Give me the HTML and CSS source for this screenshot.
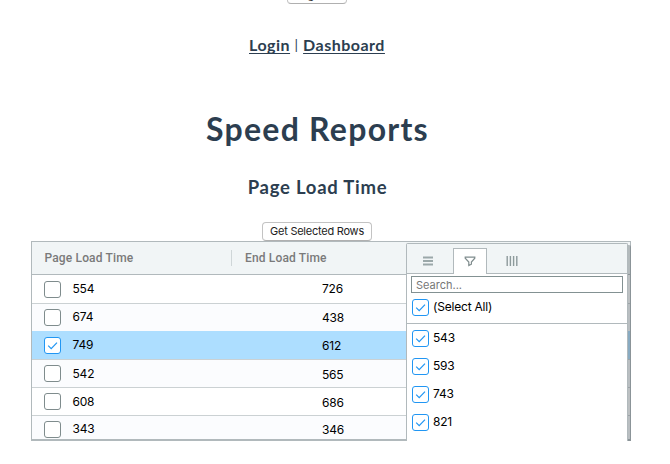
FILE: index.html
```html
<!DOCTYPE html>
<html lang="en">
<head>
<meta charset="utf-8">
<title>Speed Reports</title>
<link rel="stylesheet" href="styles.css">
</head>
<body>
<svg class="defs" width="0" height="0"><defs>
<symbol id="check" viewBox="0 0 17 17"><path d="M4.2 8.6 7.2 11.6 13 5.6" fill="none" stroke="#2196f3" stroke-width="1.2"/></symbol>
</defs></svg>
<div class="top"><button class="btn logout">Log Out</button></div>
<nav class="nav"><a href="#">Login</a><span class="bar">|</span><a href="#">Dashboard</a></nav>
<h1>Speed Reports</h1>
<h2>Page Load Time</h2>
<div class="actions"><button class="btn">Get Selected Rows</button></div>
<main class="grid">
  <div class="head"><span class="h1c">Page Load Time</span><i class="resize"></i><span class="h2c">End Load Time</span></div>
  <div class="row first"><i class="box"></i><span class="a">554</span><span class="b">726</span></div>
  <div class="row odd nob"><i class="box"></i><span class="a">674</span><span class="b">438</span></div>
  <div class="row selected"><i class="box on"><svg><use href="#check"/></svg></i><span class="a">749</span><span class="b">612</span></div>
  <div class="row odd"><i class="box"></i><span class="a">542</span><span class="b">565</span></div>
  <div class="row"><i class="box"></i><span class="a">608</span><span class="b">686</span></div>
  <div class="row odd last"><i class="box"></i><span class="a">343</span><span class="b">346</span></div>
  <aside class="menu">
    <div class="tabs">
      <span class="tab"><svg width="12" height="10" viewBox="0 0 12 10"><path d="M1 1.5h10M1 5h10M1 8.5h10" stroke="#9ba8a9" stroke-width="1.9"/></svg></span>
      <span class="tab active"><svg width="12" height="12" viewBox="0 0 12 12"><path d="M1.2 1.2h9.6v1L7.4 6v2.2L4.8 9.5V6L1.2 2.2z" fill="none" stroke="#7f8c8d" stroke-width="1.2"/></svg></span>
      <span class="tab"><svg width="12" height="10" viewBox="0 0 12 10"><path d="M1.2 0v10M4.4 0v10M7.6 0v10M10.8 0v10" stroke="#8d9a9b" stroke-width="1.4"/></svg></span>
    </div>
    <input class="search" placeholder="Search...">
    <label class="item all"><i class="box on"><svg><use href="#check"/></svg></i>(Select All)</label>
    <div class="list">
      <label class="item"><i class="box on"><svg><use href="#check"/></svg></i>543</label>
      <label class="item"><i class="box on"><svg><use href="#check"/></svg></i>593</label>
      <label class="item"><i class="box on"><svg><use href="#check"/></svg></i>743</label>
      <label class="item"><i class="box on"><svg><use href="#check"/></svg></i>821</label>
    </div>
  </aside>
</main>
</body>
</html>
```
FILE: styles.css
```css
* { box-sizing: border-box; }
body { margin: 0; height: 464px; overflow: hidden; background: #fff; color: #2c3e50; font-family: Lato, sans-serif; }
.defs { display: block; height: 0; }
.top { height: 4px; display: flex; align-items: flex-end; padding-left: 287px; }
.btn { height: 19px; width: 110px; padding: 0; border: 1px solid #c3c3c3; border-bottom-color: #b0b0b0; border-radius: 4px; background: #fff; color: #222; font: 11px/15px Inter, sans-serif; letter-spacing: -.24px; white-space: nowrap; }
.logout { width: 60px; flex: none; padding: 2px 4px 0 0; }
.nav { height: 84px; padding: 29px 0 0 249px; display: flex; font-size: 16px; font-weight: 700; line-height: 24px; letter-spacing: .5px; }
.nav a { color: #2c3e50; text-underline-offset: 2px; text-decoration-skip-ink: none; }
.bar { width: 13px; text-align: center; font-weight: 400; font-size: 14px; line-height: 23px; }
h1, h2 { margin: 0; padding-right: 35px; text-align: center; font-weight: 700; }
h1 { height: 82px; font-size: 32px; line-height: 81px; letter-spacing: 1.25px; }
h2 { height: 34px; font-size: 18.5px; line-height: 34px; letter-spacing: .75px; }
.actions { height: 37px; padding: 18px 0 0 262px; }
.actions .btn { display: block; }
.grid { position: relative; width: 600px; height: 200px; margin-left: 31px; border: 1px solid #b1b9bc; border-bottom-width: 2px; font: 12px/27px Inter, sans-serif; letter-spacing: -.2px; color: #000; }
.head { height: 33px; display: flex; align-items: center; background: #f1f5f6; border-bottom: 1px solid #b1b9bc; color: #7a7a7a; font: 500 12px/16px Roboto, sans-serif; letter-spacing: .15px; }
.h1c { width: 199px; padding-left: 12.5px; }
.resize { width: 1px; height: 16px; background: #cfd6d8; }
.h2c { padding-left: 13px; }
.row { display: flex; height: 28px; padding-left: 12px; border-bottom: 1px solid #cbd1d3; }
.row.first { height: 29px; }
.row.odd { background: #fbfcfe; }
.row.nob { height: 27px; border-bottom: 0; }
.row.selected { height: 29px; background: #addeff; }
.row.last { height: 23px; border-bottom: 0; }
.box { flex: none; display: block; width: 17px; height: 17px; margin-top: 6px; border: 1.5px solid #7f8c8d; border-radius: 3px; background: #fff; }
.row .box { margin-top: 5px; }
.row.first .box, .row.selected .box { margin-top: 6px; }
.box.on { border-color: #2196f3; }
.box svg { display: block; width: 17px; height: 17px; margin: -1px; }
.row .a { width: 261px; padding-left: 11.5px; }
.row .b { padding-top: 1px; }
.row.last .a, .row.last .b { margin-top: -1px; }
.row.first .b { padding-top: 0; }
.row.nob .a { margin-top: -1px; }
.row.nob .b { padding-top: 0; }
.menu { position: absolute; left: 374px; top: 1px; width: 222px; height: 198px; border: 1px solid #b1b9bc; border-bottom: 0; border-radius: 2px 2px 0 0; background: #fff; box-shadow: 3px 2px 0 rgba(80,90,95,.38); clip-path: inset(0 -3px 0 0); }
.tabs { height: 30px; display: flex; align-items: flex-end; gap: 8px; padding-left: 4px; background: #f1f5f6; border-bottom: 1px solid #b1b9bc; }
.tab { height: 25px; width: 34px; display: flex; align-items: center; justify-content: center; }
.tab.active { height: 26px; margin-bottom: -1px; background: #fff; border: 1px solid #b1b9bc; border-bottom: 0; }
.search { display: block; width: 212px; height: 17px; margin: 2px 0 0 4px; padding: 0 4px; border: 1px solid #839192; background: #fff; font: 11px/15px Inter, sans-serif; }
.search::placeholder { color: #777; opacity: 1; }
.item { display: flex; gap: 4px; height: 28px; padding-left: 5px; line-height: 28px; }
.item.all { height: 31px; border-bottom: 1px solid #b1b9bc; }
```
